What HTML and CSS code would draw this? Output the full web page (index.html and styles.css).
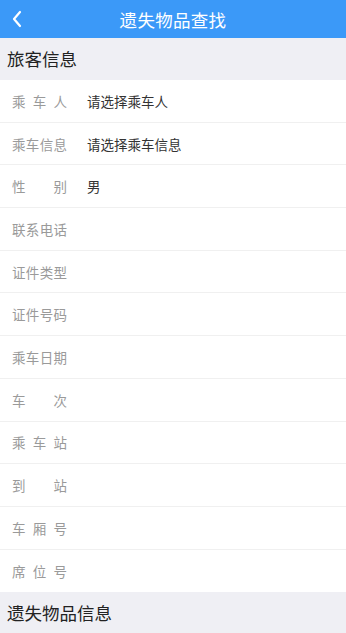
FILE: index.html
```html
<!DOCTYPE html>
<html lang="zh-CN">
<head>
  <meta charset="UTF-8">
  <meta name="viewport" content="width=device-width, initial-scale=1.0">
  <title>遗失物品查找</title>
  <link rel="stylesheet" href="styles.css">
</head>
<body>

  <div class="nav-bar">
    <span class="nav-back">
      <svg width="12" height="18" viewBox="0 0 12 18"><path d="M9 2 L3 9 L9 16" fill="none" stroke="#fff" stroke-width="2.2" stroke-linecap="round" stroke-linejoin="round"/></svg>
    </span>
    <h1 class="nav-title">遗失物品查找</h1>
  </div>

  <div class="section-title">旅客信息</div>
  <div class="form-list">
    <div class="form-row"><span class="form-label">乘车人</span><span class="form-value">请选择乘车人</span></div>
    <div class="form-row"><span class="form-label">乘车信息</span><span class="form-value">请选择乘车信息</span></div>
    <div class="form-row"><span class="form-label">性别</span><span class="form-value">男</span></div>
    <div class="form-row"><span class="form-label">联系电话</span><span class="form-value"></span></div>
    <div class="form-row"><span class="form-label">证件类型</span><span class="form-value"></span></div>
    <div class="form-row"><span class="form-label">证件号码</span><span class="form-value"></span></div>
    <div class="form-row"><span class="form-label">乘车日期</span><span class="form-value"></span></div>
    <div class="form-row"><span class="form-label">车次</span><span class="form-value"></span></div>
    <div class="form-row"><span class="form-label">乘车站</span><span class="form-value"></span></div>
    <div class="form-row"><span class="form-label">到站</span><span class="form-value"></span></div>
    <div class="form-row"><span class="form-label">车厢号</span><span class="form-value"></span></div>
    <div class="form-row"><span class="form-label">席位号</span><span class="form-value"></span></div>
  </div>

  <div class="section-title">遗失物品信息</div>

</body>
</html>
```

FILE: styles.css
```css
body {
  font-family: "Noto Sans CJK SC", "Noto Sans", sans-serif;
  margin: 0;
  padding: 0;
  background: #fff;
  color: #333;
}
.nav-bar {
  position: relative;
  height: 38px;
  background-color: #3b99f8;
  display: flex;
  align-items: center;
  justify-content: center;
}
.nav-back {
  position: absolute;
  left: 11px;
  top: 10px;
  display: flex;
}
.nav-title {
  margin: 0;
  font-size: 17.5px;
  font-weight: normal;
  color: #fff;
  letter-spacing: 0.3px;
}
.section-title {
  height: 42px;
  line-height: 42px;
  padding-left: 7px;
  font-size: 17.5px;
  background-color: #efeff4;
  color: #222;
}
.form-row {
  height: 41.7px;
  border-bottom: 1px solid #f0f0f0;
  display: flex;
  align-items: center;
  padding-left: 12px;
}
.form-row:last-child {
  border-bottom: none;
  height: 42.7px;
}
.form-label {
  width: 55px;
  font-size: 13.5px;
  color: #9a9a9a;
  text-align: justify;
  text-align-last: justify;
}
.form-value {
  margin-left: 20px;
  font-size: 13.5px;
  color: #333;
}
```
